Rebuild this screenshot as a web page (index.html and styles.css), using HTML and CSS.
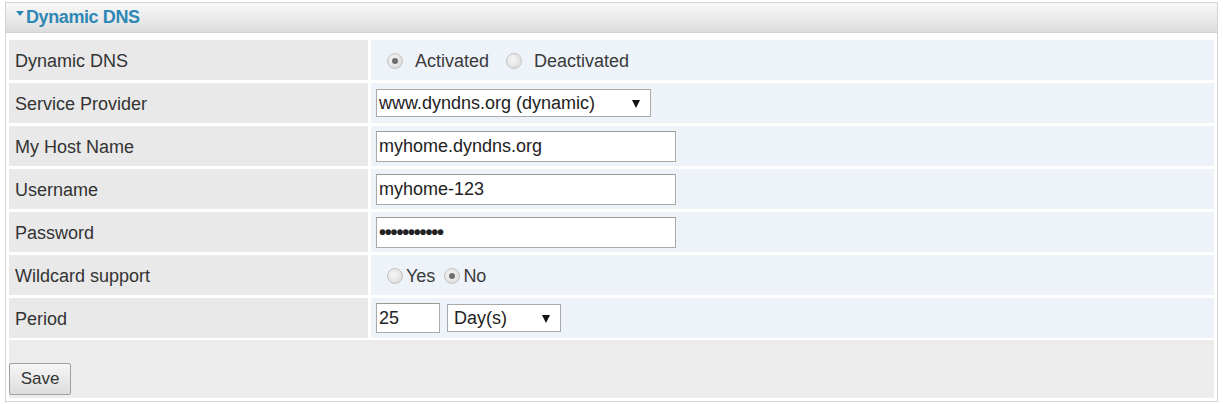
FILE: index.html
```html
<!DOCTYPE html>
<html lang="en">
<head>
<meta charset="utf-8">
<title>Dynamic DNS</title>
<link rel="stylesheet" href="styles.css">
</head>
<body>
<div class="panel">
  <div class="title"><span class="tri"></span>Dynamic DNS</div>
  <div class="rows">
    <div class="label">Dynamic DNS</div>
    <div class="value">
      <label class="radio"><span class="dot on"></span>Activated</label>
      <label class="radio"><span class="dot"></span>Deactivated</label>
    </div>

    <div class="label">Service Provider</div>
    <div class="value">
      <span class="sel sel-provider">www.dyndns.org (dynamic)</span>
    </div>

    <div class="label">My Host Name</div>
    <div class="value"><input class="txt" type="text" value="myhome.dyndns.org"></div>

    <div class="label">Username</div>
    <div class="value"><input class="txt" type="text" value="myhome-123"></div>

    <div class="label">Password</div>
    <div class="value"><input class="txt pw" type="password" value="myhome12345"></div>

    <div class="label">Wildcard support</div>
    <div class="value">
      <label class="radio tight"><span class="dot"></span>Yes</label>
      <label class="radio tight"><span class="dot on"></span>No</label>
    </div>

    <div class="label">Period</div>
    <div class="value">
      <input class="txt num" type="text" value="25">
      <span class="sel sel-period">Day(s)</span>
    </div>
  </div>
  <div class="actions"><button class="btn" type="button">Save</button></div>
</div>
</body>
</html>
```

FILE: styles.css
```css
html, body {
  margin: 0;
  padding: 0;
  background: #ffffff;
}

body {
  font-family: "Liberation Sans", Arial, sans-serif;
  font-size: 18px;
  color: #333333;
}

.panel {
  margin: 2px 0 0 5px;
  width: 1205px;
  padding: 3px;
  border: 1px solid #d3d3d3;
}

.title {
  margin: -3px -3px 7px;
  height: 29px;
  border-bottom: 1px solid #d2d2d2;
  background: linear-gradient(#f8f8f8, #e6e6e6 70%, #dcdcdc);
  display: flex;
  align-items: center;
  padding-left: 10px;
  font-weight: bold;
  font-size: 18px;
  letter-spacing: -0.4px;
  color: #2e88b5;
}

.tri {
  width: 0;
  height: 0;
  border-left: 4px solid transparent;
  border-right: 4px solid transparent;
  border-top: 5px solid #2e88b5;
  margin-right: 2px;
  position: relative;
  top: -4px;
}

.rows {
  display: grid;
  grid-template-columns: 359px 1fr;
  grid-auto-rows: 40px;
  gap: 3px;
}

.label {
  background: #e9e9e9;
  display: flex;
  align-items: center;
  padding: 2px 0 0 6px;
}

.value {
  background: #eef3fa;
  display: flex;
  align-items: center;
  padding-left: 5px;
}

.radio {
  display: flex;
  align-items: center;
  color: #3a3a3a;
  padding-top: 2px;
}

.radio .dot {
  width: 14px;
  height: 14px;
  border-radius: 50%;
  border: 1px solid #c4c4c4;
  background: radial-gradient(circle at 40% 40%, #f6f6f6, #d6d6d6);
  margin: 0 12px 0 11px;
  display: flex;
  align-items: center;
  justify-content: center;
}

.radio + .radio .dot {
  margin-left: 17px;
}

.radio .dot.on::after {
  content: "";
  width: 6px;
  height: 6px;
  border-radius: 50%;
  background: #6e6e6e;
}

.radio.tight .dot {
  margin-right: 3px;
}

.radio.tight + .radio.tight .dot {
  margin-left: 9px;
}

.sel {
  position: relative;
  display: flex;
  align-items: center;
  height: 26px;
  border: 1px solid #a9a9a9;
  background: #ffffff;
  padding-left: 2px;
  color: #222222;
  box-sizing: content-box;
}

.sel::after {
  content: "";
  position: absolute;
  right: 10px;
  top: 10px;
  width: 0;
  height: 0;
  border-left: 4px solid transparent;
  border-right: 4px solid transparent;
  border-top: 8px solid #111111;
}

.sel-provider {
  width: 271px;
}

.sel-period {
  width: 106px;
  margin-left: 7px;
  padding-left: 6px;
}

.txt {
  font-family: "Liberation Sans", Arial, sans-serif;
  font-size: 18px;
  color: #222222;
  width: 300px;
  height: 31px;
  box-sizing: border-box;
  border: 1px solid #a9a9a9;
  border-top-color: #9a9a9a;
  padding: 0 2px;
  background: #ffffff;
  margin: 0;
}

.txt.pw {
  font-size: 20px;
  font-weight: bold;
  letter-spacing: -1.2px;
}

.txt.num {
  width: 64px;
  height: 30px;
}

.actions {
  margin-top: 2px;
  height: 58px;
  background: #ececec;
  display: flex;
  align-items: flex-end;
  padding-bottom: 3px;
  box-sizing: border-box;
}

.btn {
  font-family: "Liberation Sans", Arial, sans-serif;
  font-size: 17px;
  color: #333333;
  width: 62px;
  height: 32px;
  border: 1px solid #a0a0a0;
  border-radius: 2px;
  background: linear-gradient(#f6f6f6, #dddddd);
  padding: 0;
  margin: 0;
}
```
